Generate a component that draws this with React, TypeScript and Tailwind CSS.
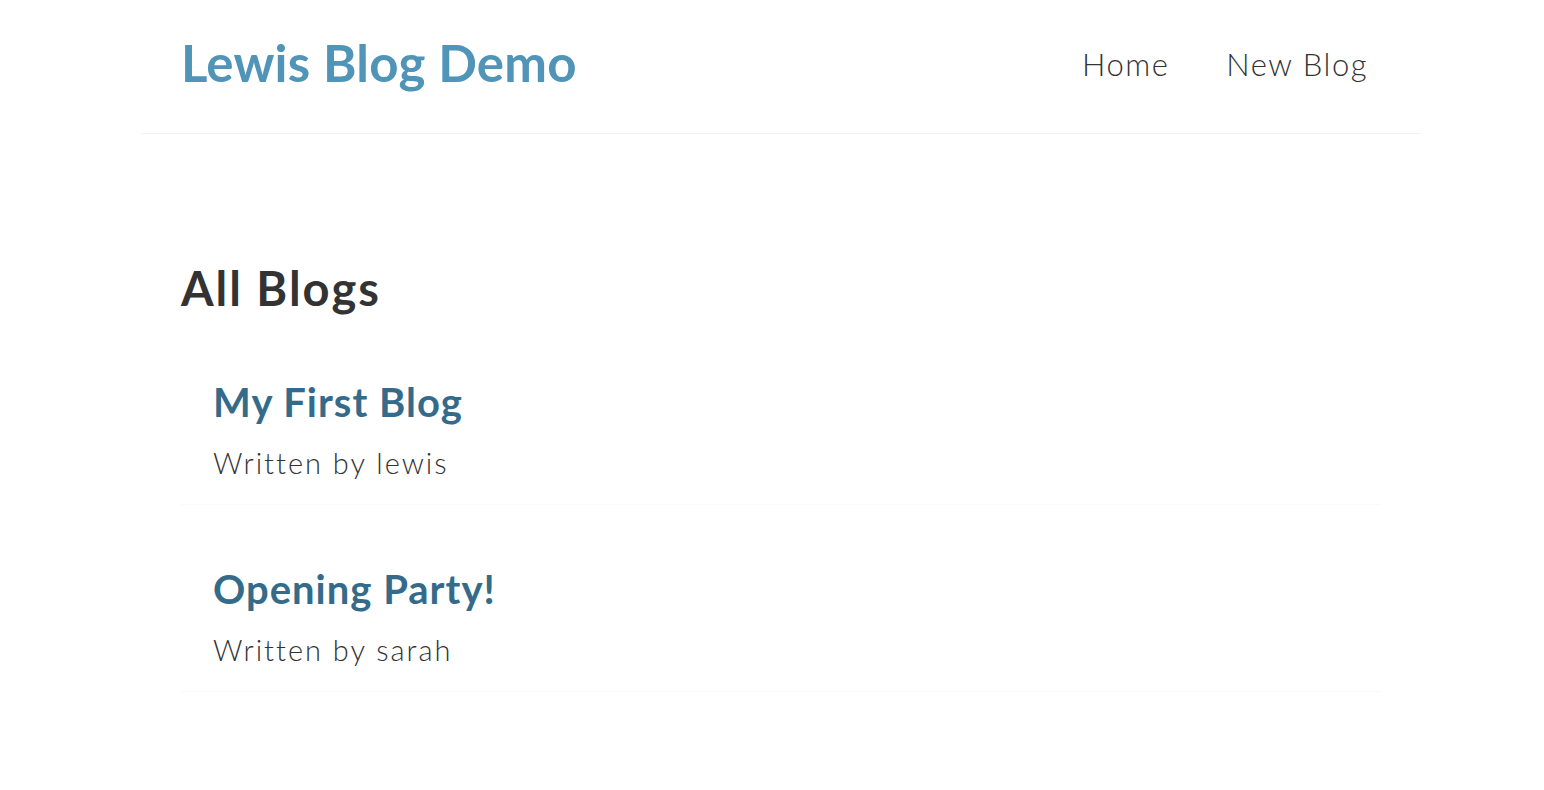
import React from "react";

const blogs = [
  { id: 1, title: "My First Blog", author: "lewis" },
  { id: 2, title: "Opening Party!", author: "sarah" },
];

export default function App() {
  return (
    <div className="min-h-screen bg-white pl-[18px] text-[#333333]" style={{ fontFamily: "Lato, 'Noto Sans', sans-serif" }}>
      <nav className="mx-auto flex h-[134px] max-w-[1280px] items-center border-b border-[#f2f2f2] px-[40px] pb-[5px]">
        <h1 className="mb-[4px] text-[51px] font-bold leading-none tracking-[0.2px] text-[#5095b8]">Lewis Blog Demo</h1>
        <div className="ml-auto flex items-center">
          <a href="#" className="ml-[31px] p-[13px] text-[31px] font-light leading-none tracking-[1.5px] text-[#333333]">Home</a>
          <a href="#" className="ml-[31px] p-[13px] text-[31px] font-light leading-none tracking-[1.5px] text-[#333333]">New Blog</a>
        </div>
      </nav>
      <main className="mx-auto max-w-[1280px] px-[40px] pt-[126px]">
        <h2 className="text-[47px] font-bold leading-[56px] tracking-[2px] text-[#333333]">All Blogs</h2>
        <div className="mt-[42px]">
          {blogs.map((b) => (
            <div key={b.id} className="mb-[40px] border-b border-[#fafafa] px-[32px] pb-[21px] pt-[20px]">
              <h3 className="mb-[17px] text-[40px] font-bold leading-[48px] tracking-[1px] text-[#356b8a]">{b.title}</h3>
              <p className="text-[29px] font-light leading-[40px] tracking-[2px] text-[#333333]">Written by {b.author}</p>
            </div>
          ))}
        </div>
      </main>
    </div>
  );
}
